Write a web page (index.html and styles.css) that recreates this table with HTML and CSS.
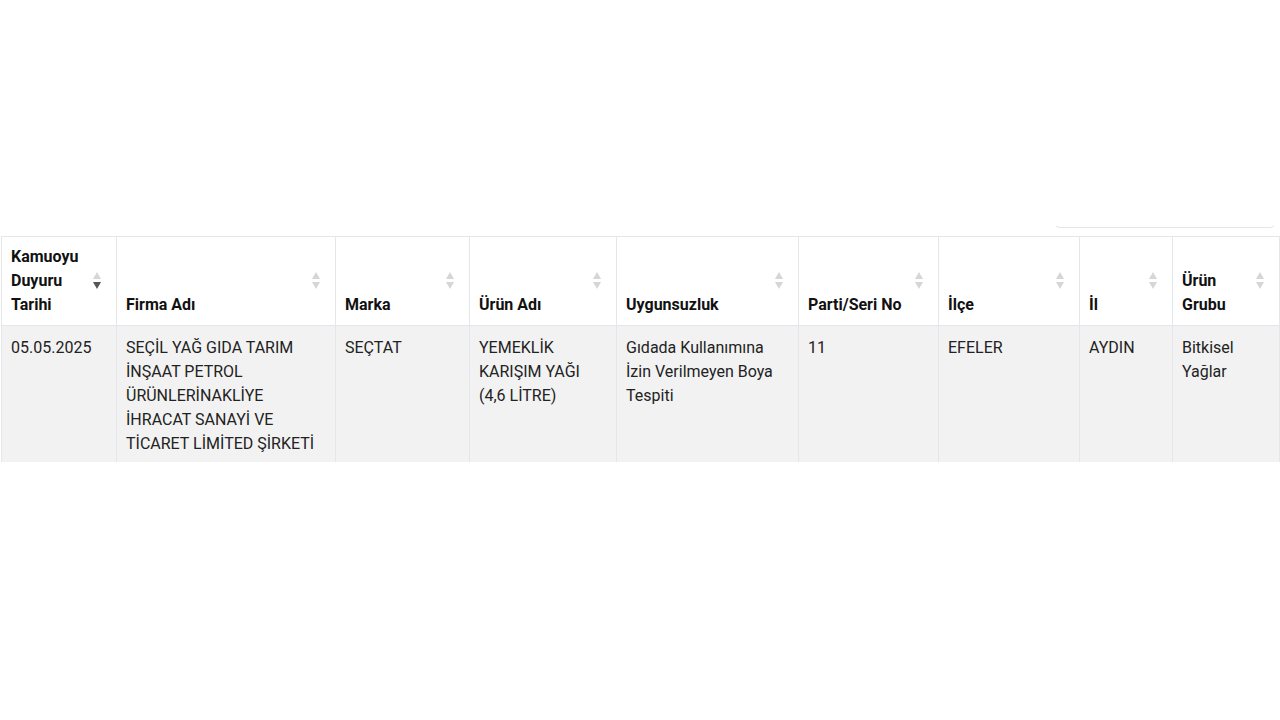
FILE: index.html
```html
<!DOCTYPE html>
<html lang="tr">
<head>
<meta charset="utf-8">
<title>Kamuoyu Duyuruları</title>
<link rel="stylesheet" href="styles.css">
</head>
<body>
<div class="page">
  <div class="toolbar">
    <div class="search-box"></div>
  </div>
  <table class="data-table">
    <colgroup>
      <col class="c1"><col class="c2"><col class="c3"><col class="c4"><col class="c5"><col class="c6"><col class="c7"><col class="c8"><col class="c9">
    </colgroup>
    <thead>
      <tr>
        <th class="sorted-desc">Kamuoyu Duyuru Tarihi<span class="sort"></span></th>
        <th>Firma Adı<span class="sort"></span></th>
        <th>Marka<span class="sort"></span></th>
        <th>Ürün Adı<span class="sort"></span></th>
        <th>Uygunsuzluk<span class="sort"></span></th>
        <th>Parti/Seri No<span class="sort"></span></th>
        <th>İlçe<span class="sort"></span></th>
        <th>İl<span class="sort"></span></th>
        <th>Ürün Grubu<span class="sort"></span></th>
      </tr>
    </thead>
    <tbody>
      <tr>
        <td>05.05.2025</td>
        <td>SEÇİL YAĞ GIDA TARIM İNŞAAT PETROL ÜRÜNLERİNAKLİYE İHRACAT SANAYİ VE TİCARET LİMİTED ŞİRKETİ</td>
        <td>SEÇTAT</td>
        <td>YEMEKLİK KARIŞIM YAĞI (4,6 LİTRE)</td>
        <td>Gıdada Kullanımına İzin Verilmeyen Boya Tespiti</td>
        <td>11</td>
        <td>EFELER</td>
        <td>AYDIN</td>
        <td>Bitkisel Yağlar</td>
      </tr>
    </tbody>
  </table>
</div>
</body>
</html>
```
FILE: styles.css
```css
html, body {
  margin: 0;
  padding: 0;
  background: #fff;
}
body {
  font-family: Roboto, "Liberation Sans", sans-serif;
  font-size: 16px;
  color: #222;
}
.page {
  padding: 0 1px 0 1px;
}
.toolbar {
  height: 236px;
  display: flex;
  justify-content: flex-end;
  align-items: flex-end;
}
.search-box {
  width: 220px;
  height: 30px;
  margin: 0 3px 8px 0;
  border: 1px solid transparent;
  border-bottom-color: #e6e6e6;
  border-radius: 0 0 6px 6px;
}
.data-table {
  width: 1278px;
  table-layout: fixed;
  border-collapse: collapse;
}
.c1 { width: 115px; }
.c2 { width: 219px; }
.c3 { width: 134px; }
.c4 { width: 147px; }
.c5 { width: 182px; }
.c6 { width: 140px; }
.c7 { width: 141px; }
.c8 { width: 93px; }
.c9 { width: 107px; }
.data-table th,
.data-table td {
  border: 1px solid #e3e6ea;
  text-align: left;
  line-height: 24px;
}
.data-table th {
  position: relative;
  vertical-align: bottom;
  font-weight: 700;
  color: #111;
  padding: 8px 28px 8px 9px;
  background: #fff;
}
.data-table td {
  vertical-align: top;
  padding: 10px 9px 6px 9px;
  background: #f2f2f2;
  border-top-color: #e3e6ea;
  border-bottom: none;
}
.sort {
  position: absolute;
  right: 15px;
  top: 50%;
  width: 8px;
  height: 17px;
  margin-top: -9px;
}
.sort::before,
.sort::after {
  content: "";
  position: absolute;
  left: 0;
  border-left: 4px solid transparent;
  border-right: 4px solid transparent;
}
.sort::before {
  top: 0;
  border-bottom: 7px solid #d6d6d6;
}
.sort::after {
  bottom: 0;
  border-top: 7px solid #d6d6d6;
}
.sorted-desc .sort::after {
  border-top-color: #555;
}
```
